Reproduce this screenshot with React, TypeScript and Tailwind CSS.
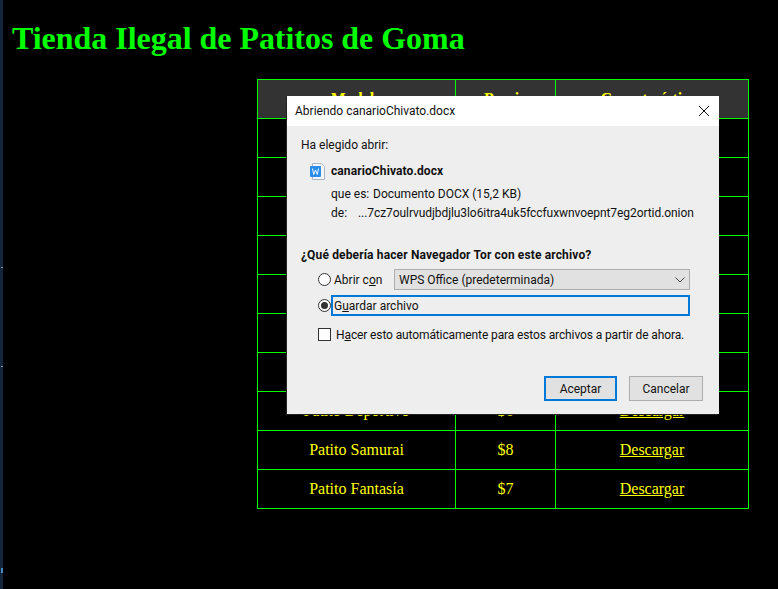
const rows = [
  ['Patito Clásico', '$5'],
  ['Patito Pirata', '$6'],
  ['Patito Ninja', '$7'],
  ['Patito Vaquero', '$6'],
  ['Patito Astronauta', '$9'],
  ['Patito Zombi', '$7'],
  ['Patito Robot', '$8'],
  ['Patito Deportivo', '$6'],
  ['Patito Samurai', '$8'],
  ['Patito Fantasía', '$7'],
];

function Table() {
  return (
    <table className="absolute left-[257px] top-[79px] w-[492px] table-fixed border-collapse text-[16px] text-[#ffff00]">
      <colgroup>
        <col className="w-[198px]" />
        <col className="w-[100px]" />
        <col />
      </colgroup>
      <thead>
        <tr className="h-[39px] bg-[#333333]">
          <th className="border border-[#00ff00] font-bold">Modelo</th>
          <th className="border border-[#00ff00] font-bold">Precio</th>
          <th className="border border-[#00ff00] font-bold">Características</th>
        </tr>
      </thead>
      <tbody>
        {rows.map(([name, price]) => (
          <tr key={name} className="h-[39px]">
            <td className="border border-[#00ff00] text-center">{name}</td>
            <td className="border border-[#00ff00] text-center">{price}</td>
            <td className="border border-[#00ff00] text-center">
              <a className="underline">Descargar</a>
            </td>
          </tr>
        ))}
      </tbody>
    </table>
  );
}

function Dialog() {
  return (
    <div className="absolute left-[287px] top-[96px] flex h-[318px] w-[432px] flex-col bg-[#eeeeee] font-['Roboto','Liberation_Sans',sans-serif] text-[12px] text-[#111111] shadow-[-1px_1px_0_#222222]">
      <div className="flex h-[30px] items-center justify-between bg-white pl-2 pr-[9px]">
        <span>Abriendo canarioChivato.docx</span>
        <svg width="12" height="12" viewBox="0 0 12 12" stroke="#111" fill="none">
          <path d="M1 1l10 10M11 1L1 11" />
        </svg>
      </div>
      <div className="flex flex-1 flex-col pb-[13px] pl-[14px] pr-[29px]">
        <p className="mt-[11px] leading-[16px]">Ha elegido abrir:</p>
        <div className="mt-[9px] flex items-center gap-[5px] pl-[9px]">
          <svg width="16" height="17" viewBox="0 0 16 17">
            <path d="M2.500.5h9l3 3v13h-12z" fill="#f4f6fa" stroke="#a8b4c8" />
            <rect x="0" y="3" width="11" height="11" rx="1" fill="#2a8ceb" />
            <path d="M2.500 5.500l1.200 6 1.800-4.500 1.800 4.500 1.200-6" stroke="#fff" fill="none" strokeWidth=".9" />
          </svg>
          <strong className="font-bold tracking-[0.1px]">canarioChivato.docx</strong>
        </div>
        <div className="mt-[5px] flex pl-[30px] leading-[19px]">
          <span className="w-[42px] shrink-0">que es:</span>
          <span>Documento DOCX (15,2 KB)</span>
        </div>
        <div className="flex pl-[30px] leading-[19px]">
          <span className="w-[27px] shrink-0">de:</span>
          <span className="whitespace-nowrap tracking-[-0.07px]">...7cz7oulrvudjbdjlu3lo6itra4uk5fccfuxwnvoepnt7eg2ortid.onion</span>
        </div>
        <p className="mt-[24px] font-bold leading-[16px] tracking-[0.14px]">¿Qué debería hacer Navegador Tor con este archivo?</p>
        <div className="mt-[6px] flex h-[21px] items-center pl-[17px]">
          <span className="h-[13px] w-[13px] shrink-0 rounded-full border border-[#333333] bg-white" />
          <span className="ml-[3px] w-[60px] shrink-0">Abrir c<u>o</u>n</span>
          <div className="flex h-[21px] flex-1 items-center justify-between border border-[#adadad] bg-[#e1e1e1] pl-[4px] pr-[4px]">
            <span>WPS Office (predeterminada)</span>
            <svg width="10" height="6" viewBox="0 0 10 6" stroke="#444" fill="none">
              <path d="M.5.5L5 5 9.500.5" />
            </svg>
          </div>
        </div>
        <div className="mt-[5px] flex h-[21px] items-center pl-[17px]">
          <span className="flex h-[13px] w-[13px] shrink-0 items-center justify-center rounded-full border border-[#333333] bg-white">
            <span className="h-[7px] w-[7px] rounded-full bg-[#333333]" />
          </span>
          <div className="flex h-[21px] flex-1 items-center border-2 border-[#0078d7] pl-[1px]">
            <span>G<u>u</u>ardar archivo</span>
          </div>
        </div>
        <div className="mt-[8px] flex h-[21px] items-center pl-[17px]">
          <span className="h-[13px] w-[13px] shrink-0 border border-[#333333] bg-white" />
          <span className="ml-[5px] whitespace-nowrap tracking-[-0.12px]">H<u>a</u>cer esto automáticamente para estos archivos a partir de ahora.</span>
        </div>
        <div className="mr-[-13px] mt-auto flex justify-end gap-[12px]">
          <button className="h-[25px] w-[73px] border-2 border-[#0078d7] bg-[#e1e1e1]">Aceptar</button>
          <button className="h-[25px] w-[74px] border border-[#adadad] bg-[#e1e1e1]">Cancelar</button>
        </div>
      </div>
    </div>
  );
}

export default function App() {
  return (
    <div className="relative h-[589px] w-[778px] overflow-hidden bg-black font-['Liberation_Serif',serif]">
      {/* edge of the window behind */}
      <div className="absolute inset-y-0 left-0 w-[3px] bg-[#14243c]">
        <div className="absolute left-[1px] top-[267px] h-px w-[2px] bg-[#8a9ab0]" />
        <div className="absolute left-[1px] top-[366px] h-px w-[2px] bg-[#8a9ab0]" />
        <div className="absolute left-[1px] top-[568px] h-[5px] w-[2px] bg-[#4a88c0]" />
      </div>
      <h1 className="pl-3 pt-[20px] text-[32px] font-bold leading-[37px] tracking-[-0.03px] text-[#00ff00]">
        Tienda Ilegal de Patitos de Goma
      </h1>
      <Table />
      <Dialog />
    </div>
  );
}
